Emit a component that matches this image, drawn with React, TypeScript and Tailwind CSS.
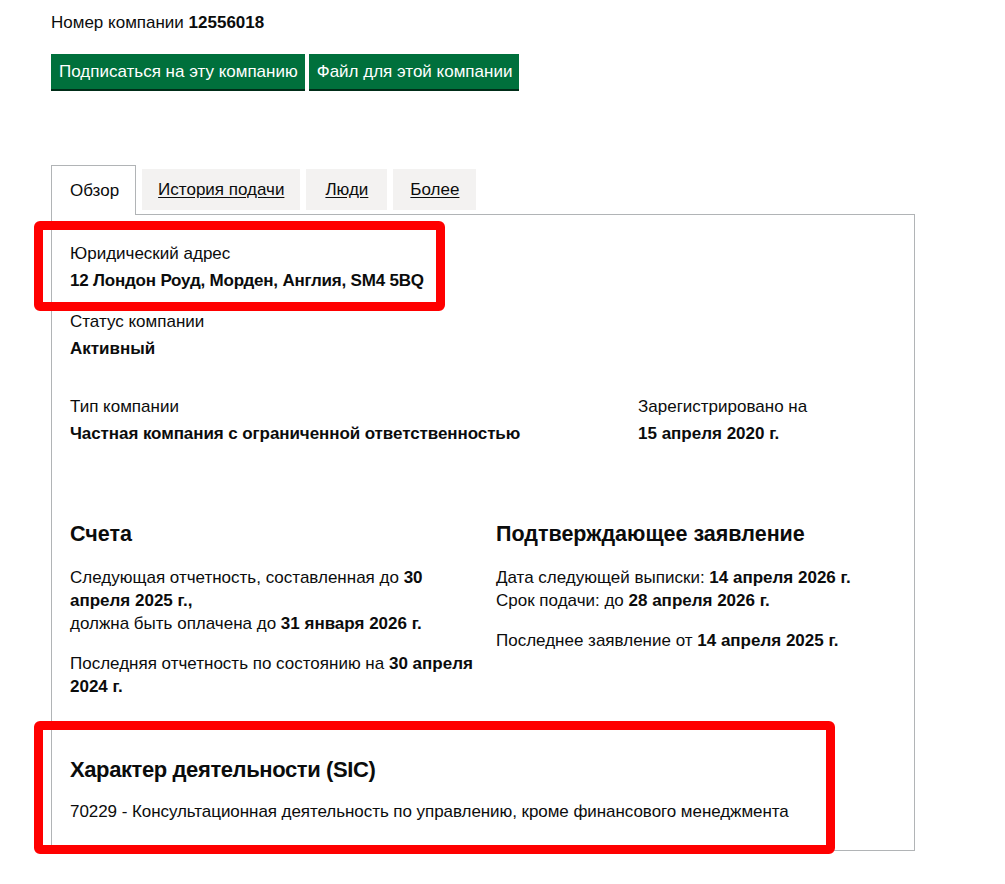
export default function App() {
  return (
    <div className="relative min-h-[884px] w-full bg-white pl-[51px] pt-[13px] font-['Liberation_Sans',Arial,sans-serif] text-[17px] text-[#0b0c0c]">
      <p className="leading-5">
        Номер компании <b>12556018</b>
      </p>

      <div className="mt-[21px] flex gap-[4px]">
        <button
          type="button"
          className="h-[35px] bg-[#00703c] pl-[8px] pr-[7px] text-[17px] leading-5 text-white shadow-[0_2px_0_#002d18]"
        >
          Подписаться на эту компанию
        </button>
        <button
          type="button"
          className="h-[35px] bg-[#00703c] pl-[8px] pr-[7px] text-[17px] leading-5 text-white shadow-[0_2px_0_#002d18]"
        >
          Файл для этой компании
        </button>
      </div>

      {/* tabs */}
      <div className="mt-[76px] flex items-start gap-[6px]">
        <div className="relative z-10 h-[50px] border border-b-0 border-[#b1b4b6] bg-white pl-[18px] pr-[16px] pt-[13px] leading-[23px]">
          Обзор
        </div>
        <a href="#" className="mt-[4px] h-[41px] bg-[#f3f2f1] px-[16px] pt-[9px] leading-[23px] underline underline-offset-2">
          История подачи
        </a>
        <a href="#" className="mt-[4px] h-[41px] bg-[#f3f2f1] px-[19px] pt-[9px] leading-[23px] underline underline-offset-2">
          Люди
        </a>
        <a href="#" className="mt-[4px] h-[41px] bg-[#f3f2f1] px-[17px] pt-[9px] leading-[23px] underline underline-offset-2">
          Более
        </a>
      </div>

      <div className="-mt-px w-[864px] border border-[#b1b4b6] px-[18px] pb-[27px] pt-[27px] leading-[23px]">
        <div>
          <p>Юридический адрес</p>
          <p className="mt-[4px] font-bold tracking-[-0.2px]">12 Лондон Роуд, Морден, Англия, SM4 5BQ</p>
        </div>
        <div className="mt-[18px]">
          <p>Статус компании</p>
          <p className="mt-[4px] font-bold">Активный</p>
        </div>

        <div className="mt-[35px] grid grid-cols-[568px_1fr]">
          <div>
            <p>Тип компании</p>
            <p className="mt-[4px] font-bold tracking-[-0.08px]">Частная компания с ограниченной ответственностью</p>
          </div>
          <div>
            <p>Зарегистрировано на</p>
            <p className="mt-[4px] font-bold">15 апреля 2020 г.</p>
          </div>
        </div>

        <div className="mt-[75px] grid grid-cols-[426px_1fr]">
          <div className="pr-[16px]">
            <h2 className="text-[21.5px] font-bold leading-[28px]">Счета</h2>
            <p className="mt-[18px]">
              Следующая отчетность, составленная до <b>30 апреля 2025 г.,</b>
              <br />
              должна быть оплачена до <b>31 января 2026 г.</b>
            </p>
            <p className="mt-[17px]">
              Последняя отчетность по состоянию на <b>30 апреля 2024 г.</b>
            </p>
          </div>
          <div>
            <h2 className="text-[21.5px] font-bold leading-[28px]">Подтверждающее заявление</h2>
            <p className="mt-[18px]">
              Дата следующей выписки: <b>14 апреля 2026 г.</b>
              <br />
              Срок подачи: до <b>28 апреля 2026 г.</b>
            </p>
            <p className="mt-[17px]">
              Последнее заявление от <b>14 апреля 2025 г.</b>
            </p>
          </div>
        </div>

        <div className="mt-[58px]">
          <h2 className="text-[22px] font-bold leading-[28px] tracking-[-0.4px]">Характер деятельности (SIC)</h2>
          <p className="mt-[16px] tracking-[-0.06px]">
            70229 - Консультационная деятельность по управлению, кроме финансового менеджмента
          </p>
        </div>
      </div>

      {/* highlight annotations drawn over the page */}
      <div className="pointer-events-none absolute left-[34px] top-[221px] h-[90px] w-[411px] rounded-[6px] border-[9px] border-[#ff0000]" />
      <div className="pointer-events-none absolute left-[34px] top-[721px] h-[133px] w-[801px] rounded-[6px] border-[9px] border-[#ff0000]" />
    </div>
  );
}
